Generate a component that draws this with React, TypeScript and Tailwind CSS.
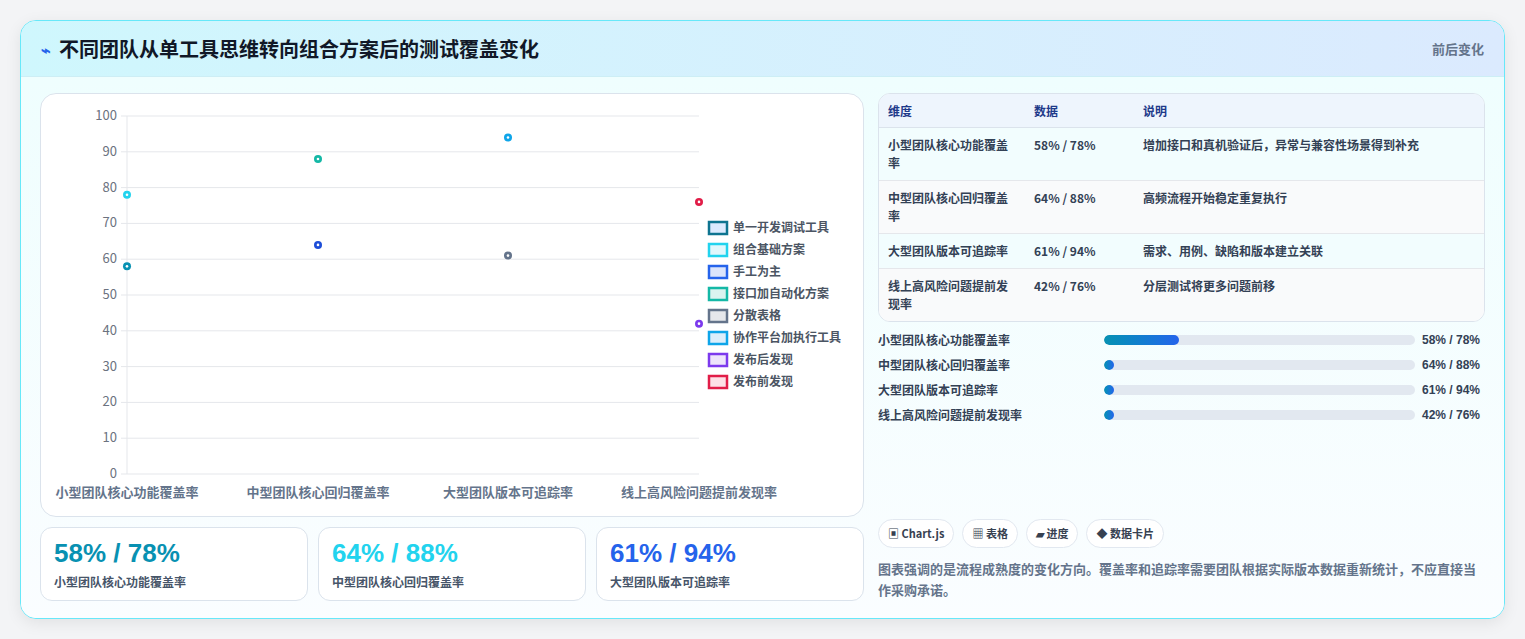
import React from "react";

const F = { fontFamily: '"Noto Sans CJK SC", "Noto Sans", sans-serif' };

const yv = (v: number) => 473 - 93 - v * 3.58;
const xs = [86, 277, 467, 658];
const pts = [
  { x: 0, v: 78, c: "#22d3ee" }, { x: 0, v: 58, c: "#0891b2" },
  { x: 1, v: 88, c: "#14b8a6" }, { x: 1, v: 64, c: "#1d4ed8" },
  { x: 2, v: 94, c: "#0ea5e9" }, { x: 2, v: 61, c: "#64748b" },
  { x: 3, v: 76, c: "#e11d48" }, { x: 3, v: 42, c: "#7c3aed" },
];
const legend = [
  ["单一开发调试工具", "#0e7490", "#dbeafe"], ["组合基础方案", "#22d3ee", "#e0f7fc"],
  ["手工为主", "#2563eb", "#dbe4fb"], ["接口加自动化方案", "#14b8a6", "#d9f3ef"],
  ["分散表格", "#64748b", "#e5e7eb"], ["协作平台加执行工具", "#0ea5e9", "#dbeefb"],
  ["发布后发现", "#7c3aed", "#ede4fb"], ["发布前发现", "#e11d48", "#fde0e6"],
];
const cats = ["小型团队核心功能覆盖率", "中型团队核心回归覆盖率", "大型团队版本可追踪率", "线上高风险问题提前发现率"];
const rows = [
  ["小型团队核心功能覆盖率", "58% / 78%", "增加接口和真机验证后，异常与兼容性场景得到补充"],
  ["中型团队核心回归覆盖率", "64% / 88%", "高频流程开始稳定重复执行"],
  ["大型团队版本可追踪率", "61% / 94%", "需求、用例、缺陷和版本建立关联"],
  ["线上高风险问题提前发现率", "42% / 76%", "分层测试将更多问题前移"],
];

function Chart() {
  return (
    <svg width="822" height="422" className="block">
      {Array.from({ length: 11 }).map((_, i) => {
        const y = yv(i * 10);
        return (
          <g key={i}>
            <line x1="86" x2="658" y1={y} y2={y} stroke="#e5e7eb" />
            <line x1="80" x2="86" y1={y} y2={y} stroke="#e5e7eb" />
            <text x="76" y={y + 4} textAnchor="end" fontSize="13" fill="#6b7280" style={F}>{i * 10}</text>
          </g>
        );
      })}
      <line x1="86" x2="86" y1={yv(100)} y2={yv(0)} stroke="#e5e7eb" />
      {pts.map((p, i) => (
        <g key={i}>
          <circle cx={xs[p.x]} cy={yv(p.v)} r="4" fill={p.c} />
          <circle cx={xs[p.x]} cy={yv(p.v)} r="1.3" fill="#fff" />
        </g>
      ))}
      {cats.map((c, i) => (
        <text key={c} x={[86, 277, 467, 658][i]} y="403" textAnchor="middle" fontSize="13" fontWeight="700" fill="#64748b" style={F}>{c}</text>
      ))}
      {legend.map(([t, c, b], i) => (
        <g key={t}>
          <rect x="668" y={128 + i * 22} width="18" height="12" fill={b} stroke={c} strokeWidth="2.5" />
          <text x="692" y={138 + i * 22} fontSize="12" fontWeight="700" fill="#4b5563" style={F}>{t}</text>
        </g>
      ))}
    </svg>
  );
}

export default function App() {
  return (
    <div className="w-[1525px] h-[639px] bg-[#f3f4f6] pt-5 px-5" style={F}>
      <div className="w-[1485px] h-[599px] rounded-2xl border border-[#67e8f9] bg-[#f6fdff] overflow-hidden shadow-[0_4px_16px_rgba(0,0,0,0.08)]">
        <div className="h-[56px] flex items-center justify-between px-5 bg-gradient-to-r from-[#cff7fd] to-[#dbeafe] border-b border-[#cdeef5]">
          <div className="flex items-center gap-2">
            <span className="text-[#2563eb] text-base font-bold">⌁</span>
            <span className="text-[20px] font-bold text-[#111827]">不同团队从单工具思维转向组合方案后的测试覆盖变化</span>
          </div>
          <span className="text-[13px] font-bold text-[#64748b]">前后变化</span>
        </div>
        <div className="flex gap-[14px] px-[19px] pt-4 bg-gradient-to-b from-[#effefe] to-[#fafdff] h-[542px]">
          <div className="w-[824px] flex flex-col gap-[10px]">
            <div className="h-[424px] rounded-2xl border border-[#dbe3ec] bg-white overflow-hidden">
              <Chart />
            </div>
            <div className="grid grid-cols-3 gap-[10px]">
              {[["58% / 78%", "#0891b2", rows[0][0]], ["64% / 88%", "#22d3ee", rows[1][0]], ["61% / 94%", "#2563eb", rows[2][0]]].map(([v, c, l]) => (
                <div key={v} className="h-[74px] rounded-xl border border-[#dbe3ec] bg-white px-[13px] pt-[7px]">
                  <div className="text-[26px] font-extrabold leading-[36px]" style={{ color: c, fontFamily: '"Liberation Sans", sans-serif' }}>{v}</div>
                  <div className="text-[12px] font-bold text-[#475569] mt-[2px]">{l}</div>
                </div>
              ))}
            </div>
          </div>
          <div className="flex-1 flex flex-col">
            <div className="rounded-xl border border-[#dbe3ec] bg-white overflow-hidden">
              <div className="flex h-[34px] items-center bg-[#eef5fd] border-b border-[#dbe3ec] text-[12px] font-bold text-[#1e3a8a] px-[9px]">
                <div className="w-[146px]">维度</div><div className="w-[109px]">数据</div><div>说明</div>
              </div>
              {rows.map((r, i) => (
                <div key={i} className={`flex px-[9px] text-[12px] font-bold text-[#334155] leading-[18px] border-b border-[#e5e7eb] last:border-b-0 py-[8px] ${i % 2 ? "bg-[#f9fafb]" : "bg-[#f2fdfe]"}`}>
                  <div className="w-[146px] pr-[16px]">{r[0]}</div><div className="w-[109px]">{r[1]}</div><div className="flex-1">{r[2]}</div>
                </div>
              ))}
            </div>
            <div className="flex flex-col gap-[7px] mt-[9px]">
              {rows.map((r, i) => (
                <div key={i} className="flex items-center h-[18px] text-[12px] font-bold text-[#334155]">
                  <div className="w-[226px]">{r[0]}</div>
                  <div className="w-[311px] h-[10px] rounded-full bg-[#e2e8f0] overflow-hidden">
                    <div className="h-full rounded-full bg-gradient-to-r from-[#0891b2] to-[#2563eb]" style={{ width: i === 0 ? "24%" : "10px" }} />
                  </div>
                  <div className="ml-auto pr-[5px]" style={{ fontFamily: '"Liberation Sans", sans-serif' }}>{r[1]}</div>
                </div>
              ))}
            </div>
            <div className="mt-auto mb-[19px]">
              <div className="flex gap-2">
                {["▣ Chart.js", "▦ 表格", "▰ 进度", "◆ 数据卡片"].map((t) => (
                  <span key={t} className="h-[29px] px-[9px] rounded-full border border-[#e2e8f0] bg-white text-[11px] font-bold text-[#374151] flex items-center">{t}</span>
                ))}
              </div>
              <p className="text-[13px] font-bold text-[#64748b] leading-[21px] mt-[10px]">图表强调的是流程成熟度的变化方向。覆盖率和追踪率需要团队根据实际版本数据重新统计，不应直接当作采购承诺。</p>
            </div>
          </div>
        </div>
      </div>
    </div>
  );
}
